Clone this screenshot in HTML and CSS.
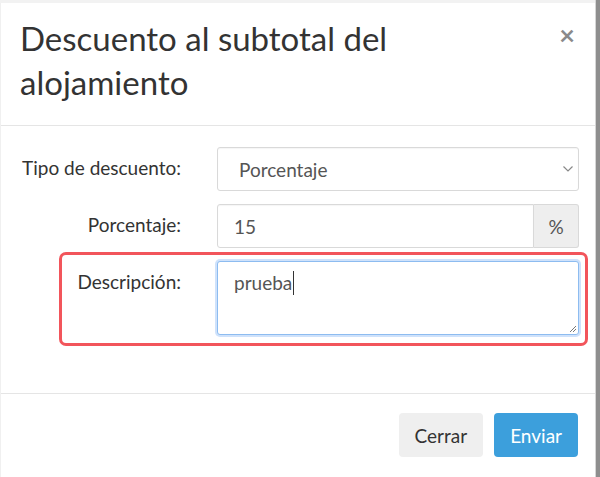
FILE: index.html
```html
<!DOCTYPE html>
<html lang="es">
<head>
    <meta charset="UTF-8">
    <meta name="viewport" content="width=device-width, initial-scale=1.0">
    <title>Descuento al subtotal del alojamiento</title>
    <link rel="stylesheet" href="styles.css">
</head>
<body>
    <div class="page">
        <div class="modal">
            <div class="modal-header">
                <h4 class="modal-title">Descuento al subtotal del alojamiento</h4>
                <button class="close" type="button">&times;</button>
            </div>

            <form class="modal-body">
                <div class="form-group">
                    <label class="control-label">Tipo de descuento:</label>
                    <div class="control select-wrap">
                        <select class="form-control">
                            <option>Porcentaje</option>
                        </select>
                        <svg class="chevron" width="12" height="8" viewBox="0 0 12 8">
                            <path d="M1.5 1.5 L6 6 L10.5 1.5" fill="none" stroke="#888" stroke-width="1.2"/>
                        </svg>
                    </div>
                </div>

                <div class="form-group">
                    <label class="control-label">Porcentaje:</label>
                    <div class="control input-group">
                        <input class="form-control" type="text" value="15">
                        <span class="input-group-addon">%</span>
                    </div>
                </div>

                <div class="form-group highlight">
                    <label class="control-label">Descripción:</label>
                    <div class="control">
                        <div class="form-control textarea focused">prueba<span class="caret"></span>
                            <svg class="grip" width="9" height="9" viewBox="0 0 9 9">
                                <path d="M8 2 L2 8 M8 5 L5 8" stroke="#777" stroke-width="1"/>
                            </svg>
                        </div>
                    </div>
                </div>
            </form>

            <div class="modal-footer">
                <button class="btn btn-default" type="button">Cerrar</button>
                <button class="btn btn-primary" type="button">Enviar</button>
            </div>
        </div>
    </div>
</body>
</html>
```

FILE: styles.css
```css
body {
    margin: 0;
    background-color: #8e8e8e;
    font-family: Lato, "Open Sans", sans-serif;
    color: #333;
}

.page {
    width: 596px;
    height: 477px;
    background-color: #f2f2f2;
    padding-top: 3px;
    box-sizing: border-box;
    border-right: 1px solid #d6d6d6;
}

.modal {
    background-color: #fff;
    height: 474px;
    border-left: 1px solid #f0f0f0;
}

.modal-header {
    display: flex;
    justify-content: space-between;
    align-items: flex-start;
    padding: 13px 20px 21px 19px;
    border-bottom: 1px solid #e5e5e5;
}

.modal-title {
    margin: 0;
    width: 420px;
    font-size: 33px;
    font-weight: 400;
    line-height: 44px;
    color: #333;
}

.close {
    border: none;
    background: none;
    padding: 0;
    margin-top: 5px;
    font-family: inherit;
    font-size: 27px;
    font-weight: 700;
    line-height: 1;
    color: #8a8a8a;
    cursor: pointer;
}

.modal-body {
    margin: 0;
    padding: 21px 16px 58px 0;
}

.form-group {
    display: flex;
    align-items: flex-start;
    margin-bottom: 13px;
}

.form-group:last-child {
    margin-bottom: 0;
}

.control-label {
    width: 180px;
    margin-right: 36px;
    padding-top: 7px;
    text-align: right;
    font-size: 19px;
    line-height: 27px;
    color: #333;
}

.control {
    flex: 1;
    position: relative;
}

.form-control {
    display: block;
    width: 100%;
    height: 44px;
    box-sizing: border-box;
    padding: 0 16px;
    border: 1px solid #d9d9d9;
    border-radius: 3px;
    background-color: #fff;
    font-family: inherit;
    font-size: 19px;
    color: #555;
    box-shadow: inset 0 1px 1px rgba(0, 0, 0, 0.04);
}

select.form-control {
    appearance: none;
    padding-left: 21px;
}

.chevron {
    position: absolute;
    right: 5px;
    top: 18px;
}

.input-group {
    display: flex;
}

.input-group .form-control {
    flex: 1;
    border-radius: 3px 0 0 3px;
}

.input-group-addon {
    width: 45px;
    height: 44px;
    box-sizing: border-box;
    display: flex;
    align-items: center;
    justify-content: center;
    background-color: #eee;
    border: 1px solid #d9d9d9;
    border-left: none;
    border-radius: 0 3px 3px 0;
    font-size: 19px;
    color: #555;
}

.textarea {
    position: relative;
    height: 74px;
    padding-top: 7px;
    line-height: 27px;
}

.focused {
    border-color: #8dbcf0;
    box-shadow: 0 0 0 2px #cfe2fb;
}

.caret {
    display: inline-block;
    width: 1px;
    height: 24px;
    margin-left: 1px;
    vertical-align: -5px;
    background-color: #333;
}

.grip {
    position: absolute;
    right: 1px;
    bottom: 1px;
}

.highlight {
    position: relative;
}

.highlight::after {
    content: "";
    position: absolute;
    left: 58px;
    right: -9px;
    top: -9px;
    bottom: -11px;
    border: 3px solid #f2555b;
    border-radius: 7px;
    pointer-events: none;
}

.modal-footer {
    display: flex;
    justify-content: flex-end;
    gap: 11px;
    padding: 19px 17px 0 0;
    border-top: 1px solid #e5e5e5;
}

.btn {
    height: 44px;
    padding: 0 16px;
    border: none;
    border-radius: 4px;
    font-family: inherit;
    font-size: 19px;
    cursor: pointer;
}

.btn-default {
    background-color: #efefef;
    color: #333;
}

.btn-primary {
    background-color: #3c9fdc;
    color: #fff;
}
```
